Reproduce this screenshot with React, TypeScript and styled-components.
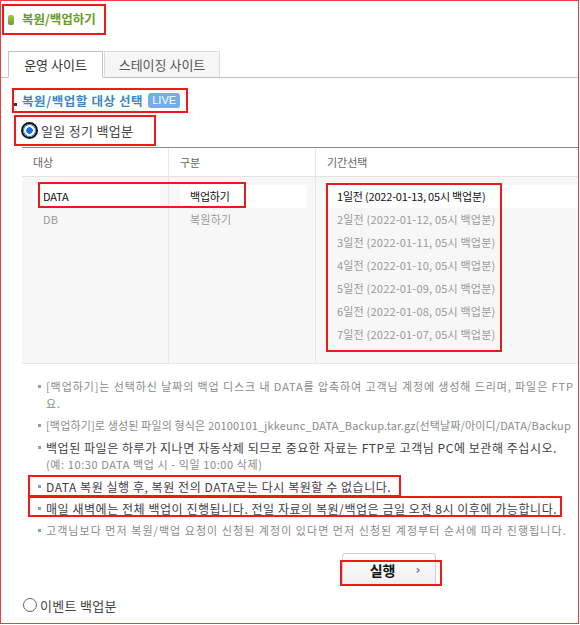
import React from 'react';
import styled, { createGlobalStyle } from 'styled-components';

const GlobalStyle = createGlobalStyle`
  html, body {
    margin: 0;
    padding: 0;
    background: #fff;
  }
  body {
    font-family: "Noto Sans CJK KR", "Noto Sans", sans-serif;
    color: #333;
  }
  * {
    box-sizing: border-box;
  }
`;

const Frame = styled.div`
  width: 579px;
  height: 624px;
  border: 1px solid #f03c3c;
  overflow: hidden;
  background: #fff;
`;

const TitleBox = styled.div`
  display: inline-flex;
  align-items: center;
  gap: 8px;
  height: 31px;
  margin: 3px 0 0 1px;
  padding: 0 8px 0 4px;
  border: 2px solid #f01818;
`;

const TitleIcon = styled.span`
  flex: none;
  display: block;
  width: 6px;
  height: 10px;
  border-radius: 2px;
  background: linear-gradient(#9ccc55, #6a9b25);
`;

const TitleText = styled.h1`
  margin: 0;
  font-size: 12.5px;
  font-weight: 700;
  color: #6a9b25;
  line-height: 1;
`;

const TabBar = styled.div`
  display: flex;
  width: 620px;
  margin-top: 16px;
  padding-left: 7px;
  border-bottom: 1px solid #bdbdbd;
`;

const Tab = styled.div<{ active?: boolean }>`
  display: flex;
  align-items: center;
  justify-content: center;
  width: ${(p) => (p.active ? '95px' : '116px')};
  height: 27px;
  margin-bottom: -1px;
  margin-right: 1px;
  border: 1px solid ${(p) => (p.active ? '#c4c4c4' : '#dcdcdc')};
  border-bottom: ${(p) => (p.active ? '1px solid #fff' : '1px solid #bdbdbd')};
  background: ${(p) => (p.active ? '#fff' : '#f6f6f6')};
  font-size: 13px;
  color: ${(p) => (p.active ? '#333' : '#555')};
`;

const SectionHead = styled.div`
  display: flex;
  align-items: center;
  gap: 5px;
  width: 176px;
  height: 25px;
  margin: 10px 0 0 11px;
  border: 2px solid #f01818;
  position: relative;
  padding-left: 8px;
`;

const Dot = styled.span`
  position: absolute;
  left: 0;
  top: 13px;
  width: 3px;
  height: 3px;
  background: #333;
`;

const SectionText = styled.span`
  font-size: 12.5px;
  font-weight: 700;
  letter-spacing: 0.6px;
  color: #3b86c8;
`;

const LiveBadge = styled.span`
  padding: 0 4px;
  height: 15px;
  line-height: 15px;
  border-radius: 3px;
  background: #72aee8;
  color: #fff;
  font-size: 11px;
  font-family: "Liberation Sans", Arial, sans-serif;
`;

const RadioLabel = styled.label<{ boxed?: boolean }>`
  display: flex;
  align-items: center;
  gap: 3px;
  width: ${(p) => (p.boxed ? '142px' : 'auto')};
  height: ${(p) => (p.boxed ? '31px' : '18px')};
  margin: ${(p) => (p.boxed ? '2px 0 0 13px' : '10px 0 0 22px')};
  padding-left: ${(p) => (p.boxed ? '5px' : '0')};
  border: ${(p) => (p.boxed ? '2px solid #f01818' : 'none')};
  font-size: 13px;
  letter-spacing: 0.3px;
  color: #444;
`;

const RadioOn = styled.span`
  flex: none;
  width: 17px;
  height: 17px;
  border-radius: 50%;
  border: 2px solid #151515;
  display: flex;
  align-items: center;
  justify-content: center;
  &::after {
    content: '';
    width: 11px;
    height: 11px;
    border-radius: 50%;
    border: 1.5px solid #1a6fe0;
    background: radial-gradient(circle, #1a6fe0 0 3px, #fff 3.6px);
  }
`;

const RadioOff = styled.span`
  flex: none;
  width: 14px;
  height: 14px;
  border-radius: 50%;
  border: 1px solid #666;
  background: #fff;
`;

const Table = styled.div`
  width: 600px;
  margin: 1px 0 0 21px;
`;

const HeadRow = styled.div`
  display: grid;
  grid-template-columns: 146px 147px 1fr;
  height: 30px;
  border-top: 1px solid #8a8a8a;
  border-bottom: 1px solid #e3e3e3;
`;

const HeadCell = styled.div`
  display: flex;
  align-items: center;
  padding-left: 11px;
  font-size: 11px;
  color: #666;
  & + & {
    border-left: 1px solid #e6e6e6;
  }
`;

const Body = styled.div`
  position: relative;
  display: grid;
  grid-template-columns: 146px 147px 1fr;
  height: 187px;
  background: #f7f7f7;
  border-bottom: 1px solid #e8e8e8;
`;

const Col = styled.div<{ last?: boolean }>`
  padding: 8px ${(p) => (p.last ? '0' : '8px')} 0 11px;
  & + & {
    border-left: 1px solid #e6e6e6;
  }
`;

const Option = styled.div<{ selected?: boolean }>`
  height: 23px;
  line-height: 23px;
  padding-left: 10px;
  font-size: 11px;
  white-space: nowrap;
  background: ${(p) => (p.selected ? '#fff' : 'transparent')};
  color: ${(p) => (p.selected ? '#111' : '#999')};
  letter-spacing: ${(p) => (p.selected ? '-0.2px' : '0.2px')};
`;

const Callout = styled.span<{ l: number; t: number; w: number; h: number }>`
  position: absolute;
  left: ${(p) => p.l}px;
  top: ${(p) => p.t}px;
  width: ${(p) => p.w}px;
  height: ${(p) => p.h}px;
  border: 2px solid #f01818;
  pointer-events: none;
`;

const Notes = styled.ul`
  list-style: none;
  margin: 14px 0 0;
  padding: 0 0 0 37px;
`;

const Note = styled.li<{ strong?: boolean; spacing?: number }>`
  position: relative;
  padding-left: 8px;
  margin-bottom: 5px;
  font-size: ${(p) => (p.strong ? '12px' : '11px')};
  line-height: 17px;
  letter-spacing: ${(p) => (p.spacing ?? (p.strong ? 0.55 : 1.05))}px;
  color: ${(p) => (p.strong ? '#404048' : '#8a8a8a')};
  white-space: nowrap;
  &::before {
    content: '';
    position: absolute;
    left: 0;
    top: 7px;
    width: 3px;
    height: 3px;
    background: #8aa0bf;
  }
`;

const SubLine = styled.span<{ muted?: boolean }>`
  display: block;
  color: ${(p) => (p.muted ? '#8a8a8a' : 'inherit')};
  font-size: ${(p) => (p.muted ? '11px' : 'inherit')};
  letter-spacing: ${(p) => (p.muted ? '0.6px' : 'inherit')};
`;

const ButtonRow = styled.div`
  margin: 14px 0 0 341px;
  position: relative;
  width: 94px;
`;

const RunButton = styled.button`
  display: flex;
  align-items: center;
  justify-content: center;
  gap: 20px;
  width: 94px;
  height: 33px;
  padding: 0 0 0 12px;
  border: 1px solid #d0d0d0;
  border-radius: 3px 3px 0 0;
  background: linear-gradient(#ffffff, #efefef);
  font-family: "Noto Sans CJK KR", sans-serif;
  font-size: 14px;
  font-weight: 700;
  color: #111;
`;

const Chevron = styled.span`
  font-size: 12px;
  font-weight: 700;
  color: #6a78a8;
  font-family: "DejaVu Sans", sans-serif;
`;

const targets = [
  { name: 'DATA', selected: true },
  { name: 'DB' },
];

const actions = [
  { name: '백업하기', selected: true },
  { name: '복원하기' },
];

const periods = [
  '1일전 (2022-01-13, 05시 백업분)',
  '2일전 (2022-01-12, 05시 백업분)',
  '3일전 (2022-01-11, 05시 백업분)',
  '4일전 (2022-01-10, 05시 백업분)',
  '5일전 (2022-01-09, 05시 백업분)',
  '6일전 (2022-01-08, 05시 백업분)',
  '7일전 (2022-01-07, 05시 백업분)',
];

export default function App() {
  return (
    <>
      <GlobalStyle />
      <Frame>
        <TitleBox>
          <TitleIcon />
          <TitleText>복원/백업하기</TitleText>
        </TitleBox>

        <TabBar>
          <Tab active>운영 사이트</Tab>
          <Tab>스테이징 사이트</Tab>
        </TabBar>

        <SectionHead>
          <Dot />
          <SectionText>복원/백업할 대상 선택</SectionText>
          <LiveBadge>LIVE</LiveBadge>
        </SectionHead>

        <RadioLabel boxed>
          <RadioOn />
          일일 정기 백업분
        </RadioLabel>

        <Table>
          <HeadRow>
            <HeadCell>대상</HeadCell>
            <HeadCell>구분</HeadCell>
            <HeadCell>기간선택</HeadCell>
          </HeadRow>
          <Body>
            <Col>
              {targets.map((t) => (
                <Option key={t.name} selected={t.selected}>
                  {t.name}
                </Option>
              ))}
            </Col>
            <Col>
              {actions.map((a) => (
                <Option key={a.name} selected={a.selected}>
                  {a.name}
                </Option>
              ))}
            </Col>
            <Col last>
              {periods.map((p, i) => (
                <Option key={p} selected={i === 0}>
                  {p}
                </Option>
              ))}
            </Col>
            <Callout l={16} t={5} w={208} h={26} />
            <Callout l={304} t={6} w={176} h={169} />
          </Body>
        </Table>

        <Notes>
          <Note spacing={0.9}>
            <SubLine>[백업하기]는 선택하신 날짜의 백업 디스크 내 DATA를 압축하여 고객님 계정에 생성해 드리며, 파일은 FTP</SubLine>
            <SubLine>요.</SubLine>
          </Note>
          <Note spacing={0.15}>[백업하기]로 생성된 파일의 형식은 20100101_jkkeunc_DATA_Backup.tar.gz(선택날짜/아이디/DATA/Backup</Note>
          <Note strong>
            <SubLine>백업된 파일은 하루가 지나면 자동삭제 되므로 중요한 자료는 FTP로 고객님 PC에 보관해 주십시오.</SubLine>
            <SubLine muted>(예: 10:30 DATA 백업 시 - 익일 10:00 삭제)</SubLine>
          </Note>
          <Note strong>
            DATA 복원 실행 후, 복원 전의 DATA로는 다시 복원할 수 없습니다.
            <Callout l={-10} t={-3} w={373} h={22} />
          </Note>
          <Note strong>
            매일 새벽에는 전체 백업이 진행됩니다. 전일 자료의 복원/백업은 금일 오전 8시 이후에 가능합니다.
            <Callout l={-10} t={-4} w={534} h={21} />
          </Note>
          <Note>고객님보다 먼저 복원/백업 요청이 신청된 계정이 있다면 먼저 신청된 계정부터 순서에 따라 진행됩니다.</Note>
        </Notes>

        <ButtonRow>
          <RunButton type="button">
            실행
            <Chevron>›</Chevron>
          </RunButton>
          <Callout l={-2} t={7} w={102} h={26} />
        </ButtonRow>

        <RadioLabel>
          <RadioOff />
          이벤트 백업분
        </RadioLabel>
      </Frame>
    </>
  );
}
